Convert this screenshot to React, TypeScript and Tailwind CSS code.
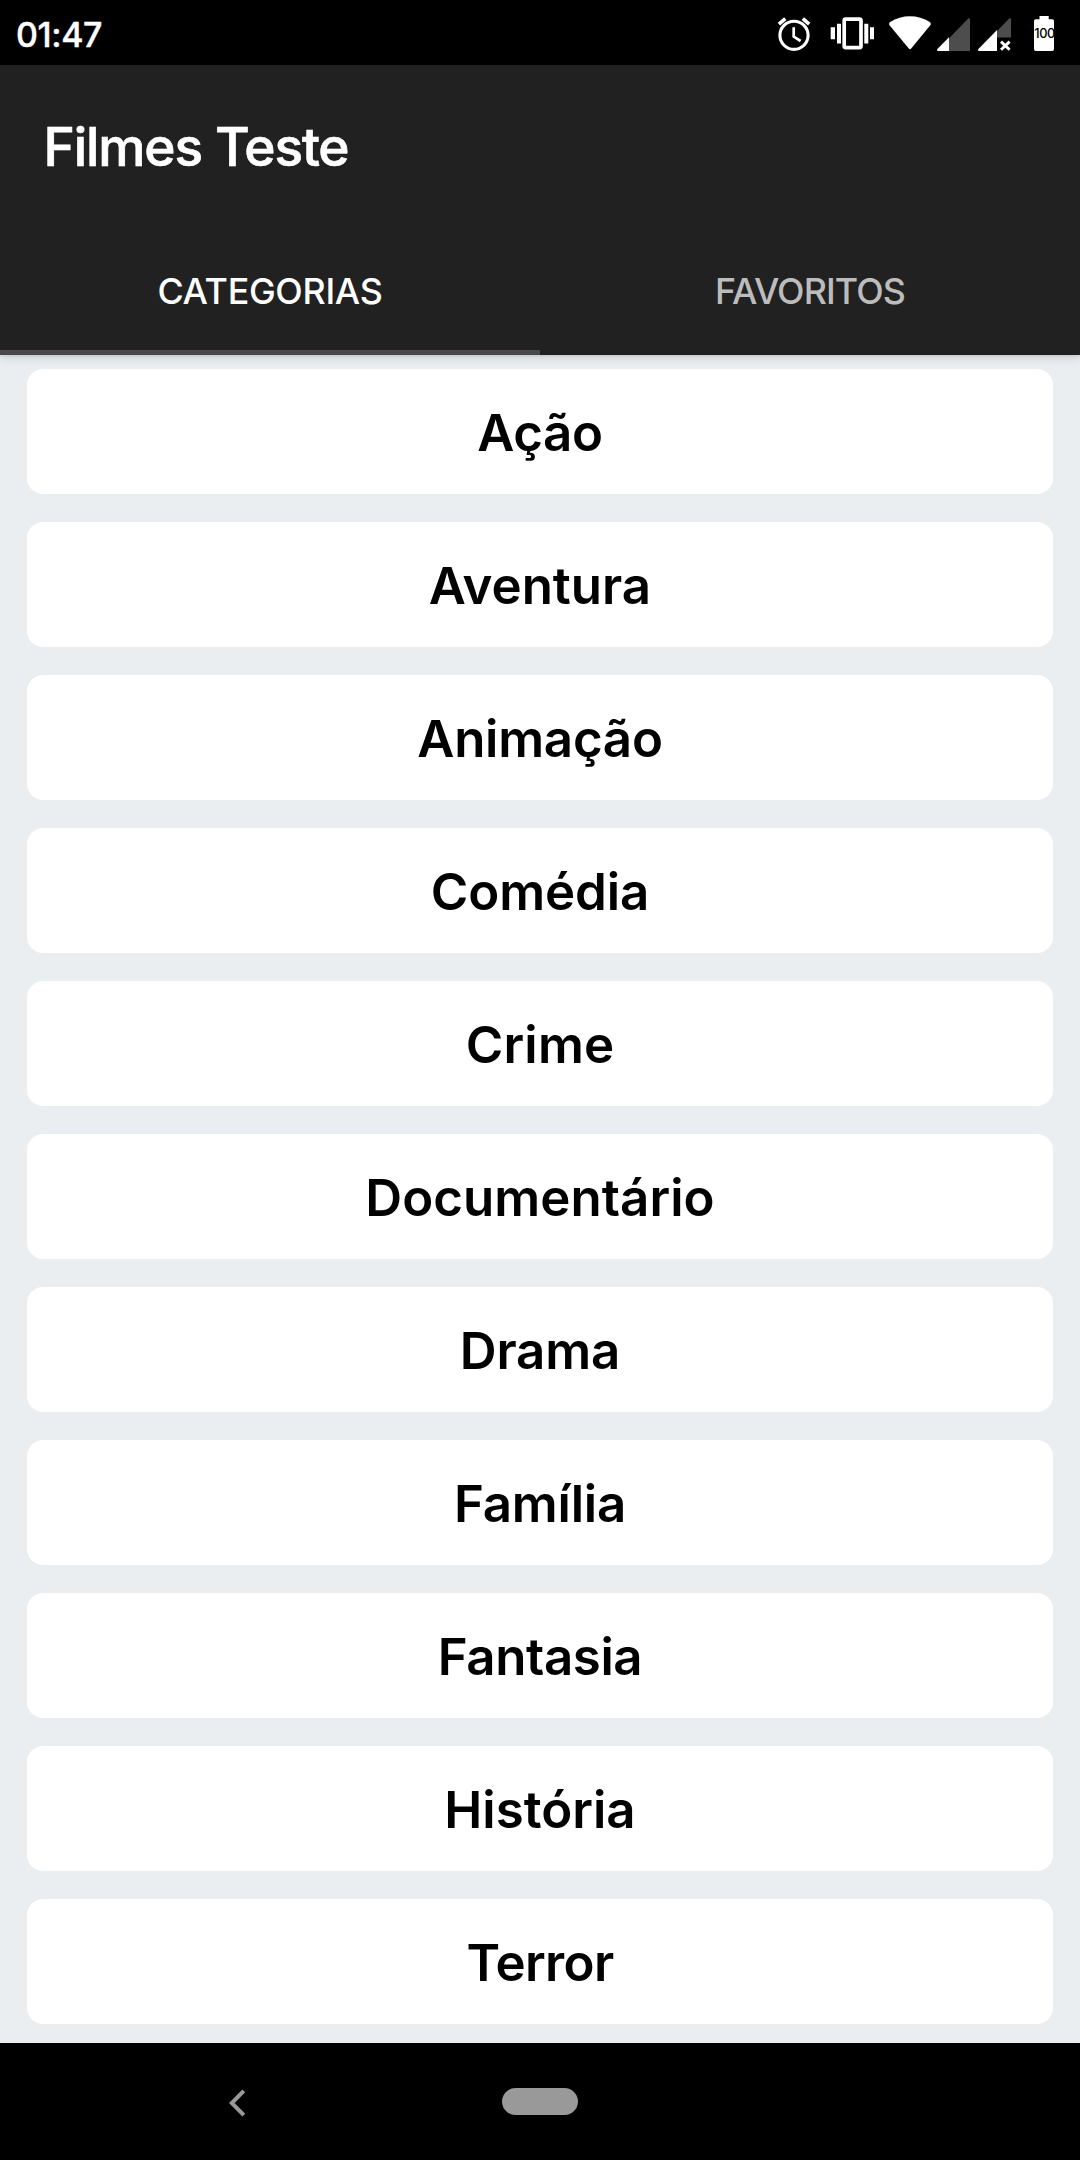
const categories = [
  { name: "Ação", tracking: "tracking-[-0.3px]" },
  { name: "Aventura", tracking: "tracking-normal" },
  { name: "Animação", tracking: "tracking-[-0.25px]" },
  { name: "Comédia", tracking: "tracking-[-0.1px]" },
  { name: "Crime", tracking: "tracking-[0.2px]" },
  { name: "Documentário", tracking: "tracking-[0.05px]" },
  { name: "Drama", tracking: "tracking-[-0.1px]" },
  { name: "Família", tracking: "tracking-[-0.2px]" },
  { name: "Fantasia", tracking: "tracking-[-0.4px]" },
  { name: "História", tracking: "tracking-normal" },
  { name: "Terror", tracking: "tracking-[-0.65px]" },
];

function AlarmIcon() {
  return (
    <svg width="36" height="36" viewBox="776 16 36 36" fill="none" stroke="#fff">
      <circle cx="794" cy="35.3" r="14.1" strokeWidth="3.1" />
      <path d="M778.9 24.2 785.3 18.7M809.2 24.2 802.8 18.7" strokeWidth="3.6" />
      <path d="M793.7 27.2V36.6L800.6 41" strokeWidth="2.7" />
    </svg>
  );
}

function VibrateIcon() {
  return (
    <svg width="44" height="36" viewBox="830 16 44 36">
      <rect x="844.2" y="19.2" width="16.8" height="28.4" rx="1.5" fill="none" stroke="#fff" strokeWidth="3.7" />
      <path
        fill="#fff"
        d="M830.7 27.3h4.3v12h-4.3zM837 23.8h4v19.6h-4zM864.3 23.8h4v19.6h-4zM870 27.3h4v12h-4z"
      />
    </svg>
  );
}

function WifiIcon() {
  return (
    <svg width="42" height="36" viewBox="889 16 42 36">
      <path
        fill="#fff"
        d="M889.5 25.2Q888.5 23.3 890.2 22.1C902 14.4 918 14.4 929.8 22.1Q931.5 23.3 930.3 25.2L911.2 48.6Q910 49.8 908.8 48.6Z"
      />
    </svg>
  );
}

function SignalIcon() {
  return (
    <svg width="34" height="36" viewBox="937 16 34 36">
      <path fill="#4d4d4d" d="M949 38.3 968.3 18.6Q970 17.2 970 19.2V51H949Z" />
      <path fill="#fff" d="M949 37.3V51H938.3Q936.2 50.6 937.4 49Z" />
    </svg>
  );
}

function SignalOffIcon() {
  return (
    <svg width="34" height="36" viewBox="978 16 34 36">
      <path fill="#4d4d4d" d="M997 31 1009.3 18.6Q1011 17.2 1011 19.2V37.6H997Z" />
      <path fill="#fff" d="M997 30V51H979.3Q977.2 50.6 978.4 49Z" />
      <path stroke="#fff" strokeWidth="2.9" d="m1001 41.6 8.6 8.2m0-8.2-8.6 8.2" />
    </svg>
  );
}

function BatteryIcon() {
  return (
    <svg width="20" height="36" viewBox="1034 16 20 36">
      <path
        fill="#fff"
        d="M1039.5 16h9.2v3.2h3.5q1.8 0 1.8 1.8v28.2q0 1.8-1.8 1.8h-16.4q-1.8 0-1.8-1.8V21q0-1.8 1.8-1.8h3.7z"
      />
      <text x="1034.3" y="38.3" fontSize="12.8" letterSpacing="-0.4" fontWeight="500" fill="#000">
        100
      </text>
    </svg>
  );
}

function StatusBar() {
  return (
    <div className="flex h-[65px] items-start justify-between bg-black pr-[26px] pl-4">
      <span className="pt-[5px] text-[34px] leading-[60px] font-medium tracking-[-0.4px] [-webkit-text-stroke:0.4px_white]">
        01:47
      </span>
      <div className="flex pt-4">
        <AlarmIcon />
        <div className="ml-[18px]"><VibrateIcon /></div>
        <div className="ml-[15px]"><WifiIcon /></div>
        <div className="ml-1.5"><SignalIcon /></div>
        <div className="ml-[7px]"><SignalOffIcon /></div>
        <div className="ml-[22px]"><BatteryIcon /></div>
      </div>
    </div>
  );
}

export default function App() {
  return (
    <div className="flex h-[2160px] w-[1080px] flex-col overflow-hidden bg-[#eaeef1] font-['Inter',sans-serif] text-white">
      <StatusBar />
      <header className="relative z-10 h-[290px] bg-[#212121] shadow-[0_2px_10px_rgba(0,0,0,0.14),0_1px_3px_rgba(60,60,20,0.1)]">
        <h1 className="h-[163px] pl-[43.5px] text-[53.2px] leading-[163px] font-medium tracking-[-1.15px] [-webkit-text-stroke:0.7px_white]">
          Filmes Teste
        </h1>
        <nav className="grid h-[127px] grid-cols-2 text-center text-[35.8px] leading-[127px] font-medium">
          <div className="h-[127px] border-b-[5px] border-[#4b4747] tracking-[-0.31px]">CATEGORIAS</div>
          <div className="tracking-[-0.91px] text-[#bcbcbc]">FAVORITOS</div>
        </nav>
      </header>
      <main className="flex h-[1688px] flex-col gap-7 px-[27px] pt-3.5">
        {categories.map(({ name, tracking }) => (
          <div
            key={name}
            className={`h-[125px] shrink-0 rounded-2xl bg-white text-center text-[51px] leading-[128px] font-semibold text-black ${tracking}`}
          >
            {name}
          </div>
        ))}
      </main>
      <footer className="flex h-[117px] items-center bg-black">
        <svg className="mt-[3px] ml-[229px]" width="17" height="28" viewBox="0 0 17 28" fill="none">
          <path d="M14.8 1.8 2.8 14l12 12.2" stroke="#999" strokeWidth="4" />
        </svg>
        <div className="ml-64 h-[27px] w-[76px] rounded-full bg-[#999]" />
      </footer>
    </div>
  );
}
